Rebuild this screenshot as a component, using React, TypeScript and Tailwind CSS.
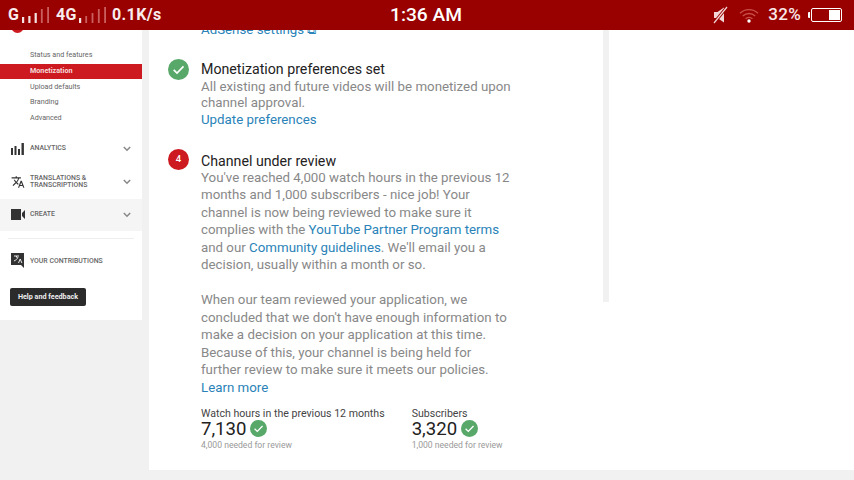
import React from "react";

const Check = ({ size }: { size: number }) => (
  <svg width={size} height={size} viewBox="0 0 24 24" className="shrink-0">
    <circle cx="12" cy="12" r="12" fill="#57a869" />
    <path d="M6.5 12.5l3.8 3.6 7.4-7.6" fill="none" stroke="#fff" strokeWidth="1.9" />
  </svg>
);

const Chevron = () => (
  <svg width="8" height="6" viewBox="0 0 8 6" className="shrink-0">
    <path d="M.8 1l3.2 3.2L7.2 1" fill="none" stroke="#888" strokeWidth="1.5" />
  </svg>
);

const Bars = ({ heights, lit, width }: { heights: number[]; lit: number; width: number }) => (
  <svg width={width} height="16" viewBox={`0 0 ${width} 16`} className="shrink-0">
    {heights.map((h, i) => (
      <rect
        key={i}
        x={i * 6.3 + 1}
        y={16 - h}
        width={i < lit ? 2.2 : 1.8}
        height={h}
        fill={i < lit ? "#f5e3e3" : "#c9605f"}
      />
    ))}
  </svg>
);

const Sub = ({ children, active }: { children: React.ReactNode; active?: boolean }) => (
  <div
    className={`flex h-[15.6px] items-center pl-[30px] text-[7.2px] ${
      active ? "bg-[#cc1a20] font-bold text-[#f7dcdc]" : "text-[#666]"
    }`}
  >
    {children}
  </div>
);

const Link = ({ children }: { children: React.ReactNode }) => (
  <span className="text-[#2a83b8]">{children}</span>
);

const Stat = ({ label, value, need }: { label: string; value: string; need: string }) => (
  <div className="flex flex-col">
    <div className="text-[10.6px] leading-[13px] text-[#444]">{label}</div>
    <div className="flex h-[20px] items-center gap-[4px] text-[18.6px] text-[#222]">
      {value}
      <span className="relative -top-[1px]">
        <Check size={17} />
      </span>
    </div>
    <div className="text-[8.6px] leading-[11px] text-[#999]">{need}</div>
  </div>
);

export default function App() {
  return (
    <div className="flex h-[480px] w-[854px] flex-col overflow-hidden bg-[#f1f1f1] font-['Roboto',sans-serif]">
      <header className="relative z-10 flex h-[30px] shrink-0 items-center bg-[#990000] pl-[8px] pr-[12px] text-white">
        <div className="flex w-[382px] items-center text-[16px] font-bold tracking-[0.4px] text-[#f8ecec]">
          <span className="w-[13px]">G</span>
          <Bars heights={[6, 7, 10, 14, 16]} lit={3} width={35} />
          <span className="w-[22px]">4G</span>
          <Bars heights={[5, 7, 10, 14, 16]} lit={1} width={34} />
          <span>0.1K/s</span>
        </div>
        <div className="text-[19.2px] font-medium">1:36 AM</div>
        <div className="ml-auto flex items-center">
          <svg width="15" height="18" viewBox="0 0 15 18" className="mr-[11px]">
            <path d="M1 6h3.500L11 1.500v15L4.500 12H1z" fill="#f2d6d6" />
            <path d="M1 17L14 1" stroke="#990000" strokeWidth="3" />
            <path d="M1 17L14 1" stroke="#f2d6d6" strokeWidth="1.2" />
          </svg>
          <svg width="20" height="15" viewBox="0 0 20 15" className="mr-[9px]">
            <path d="M1 5.200a13 13 0 0 1 18 0M3.800 8a9 9 0 0 1 12.400 0M6.600 10.800a5 5 0 0 1 6.800 0" fill="none" stroke="#c9504a" strokeWidth="1.4" />
            <circle cx="10" cy="13" r="1.700" fill="#fff" />
          </svg>
          <span className="mr-[7px] text-[17px] font-medium tracking-[0.3px] text-[#f8e8e8]">32%</span>
          <div className="flex items-center">
            <div className="h-[6px] w-[2px] rounded-l-[1px] bg-white" />
            <div className="ml-[1px] flex h-[14px] w-[31px] justify-end rounded-[2px] border border-white p-[1px]">
              <div className="w-[11px] bg-white" />
            </div>
          </div>
        </div>
      </header>

      <div className="flex min-h-0 flex-1 items-start gap-[7px]">
        <aside className="-mt-[12px] flex h-[302px] w-[142px] shrink-0 flex-col bg-white">
          <div className="flex h-[16px] items-center gap-[6px] pl-[11px] text-[7px] font-medium text-[#555]">
            <div className="h-[13px] w-[13px] rounded-full bg-[#cc1a20]" />
            <span>CHANNEL</span>
          </div>
          <div className="mt-[14px]">
            <Sub>Status and features</Sub>
            <Sub active>Monetization</Sub>
            <Sub>Upload defaults</Sub>
            <Sub>Branding</Sub>
            <Sub>Advanced</Sub>
          </div>
          <div className="mt-[6px] flex h-[32px] items-center pl-[11px] pr-[11px] pt-[2px] text-[6.9px] font-medium leading-[7.5px] text-[#666]">
            <svg width="13" height="12" viewBox="0 0 13 12" className="mr-[6px] shrink-0">
              <path d="M0 5h2v7H0zM3.500 3h2v9h-2zM7 6h2v6H7zM10.500 0h2.400v12h-2.400z" fill="#333" />
            </svg>
            <span className="flex-1">ANALYTICS</span>
            <Chevron />
          </div>
          <div className="flex h-[35px] items-center pl-[11px] pr-[11px] pt-[2px] text-[6.9px] font-medium leading-[7.3px] text-[#666]">
            <svg width="14" height="14" viewBox="0 0 24 24" className="mr-[5px] shrink-0">
              <path d="M12.900 15.100l-2.600-2.500a17.500 17.500 0 0 0 3.700-6.600H17V4h-7V2H8v2H1v2h11.200A15.700 15.700 0 0 1 9 11.400 15.600 15.600 0 0 1 6.700 8h-2c.7 1.600 1.700 3.200 3 4.600l-5.100 5L4 19l5-5 3.100 3.100zM18.500 10h-2L12 22h2l1.100-3h4.800l1.100 3h2zm-2.600 7l1.600-4.300 1.600 4.300z" fill="#333" />
            </svg>
            <span className="flex-1">
              TRANSLATIONS &amp;
              <br />
              TRANSCRIPTIONS
            </span>
            <Chevron />
          </div>
          <div className="flex h-[32px] items-center bg-[#f5f5f5] pl-[11px] pr-[11px] text-[6.9px] font-medium text-[#666]">
            <svg width="14" height="11" viewBox="0 0 14 11" className="mr-[5px] shrink-0">
              <path d="M0 0h10v11H0zM11 4l3-3v9l-3-3z" fill="#333" />
            </svg>
            <span className="mb-[1px] flex-1">CREATE</span>
            <Chevron />
          </div>
          <div className="mx-[8px] mt-[7px] h-px bg-[#eeeeee]" />
          <div className="mt-[12px] flex h-[18px] items-center pl-[11px] pt-[2px] text-[6.9px] font-medium text-[#666]">
            <svg width="14" height="15" viewBox="0 0 14 15" className="mr-[5px] shrink-0">
              <path d="M0 0h13v15l-3-3H0z" fill="#333" />
              <path d="M3 3h5M5.500 3v1.500M7 4c-.5 2-2 3-4 4" fill="none" stroke="#fff" strokeWidth=".9" />
              <path d="M7.500 10l1.700-4 1.700 4" fill="none" stroke="#fff" strokeWidth=".9" />
            </svg>
            <span>YOUR CONTRIBUTIONS</span>
          </div>
          <button className="ml-[10px] mt-[19px] flex h-[18px] w-[76px] items-center justify-center rounded-[2px] bg-[#2b2b2b] text-[7.2px] font-bold text-[#eee]">
            Help and feedback
          </button>
        </aside>

        <main className="flex h-[440px] min-w-0 flex-1 items-start overflow-hidden bg-white">
          <div className="h-full w-[454px] shrink-0 pl-[19px]">
            <div className="-mt-[9px] pl-[33px] text-[13.3px] leading-[17px] text-[#2a83b8]">AdSense settings ⧉</div>
            <section className="mt-[23px] flex">
              <div className="mt-[-2.5px] w-[33px] shrink-0">
                <Check size={21} />
              </div>
              <div className="w-[320px] text-[13.3px] leading-[16.5px] text-[#888]">
                <h2 className="text-[14.2px] font-normal leading-[17.5px] text-[#222]">Monetization preferences set</h2>
                <p>All existing and future videos will be monetized upon channel approval.</p>
                <Link>Update preferences</Link>
              </div>
            </section>
            <section className="mt-[25.5px] flex">
              <div className="-mt-[5px] w-[33px] shrink-0">
                <div className="flex h-[21px] w-[21px] items-center justify-center rounded-full bg-[#cc1a20] text-[9.500px] font-medium text-white">
                  4
                </div>
              </div>
              <div className="w-[312px] text-[13.3px] leading-[17.5px] text-[#888]">
                <h2 className="text-[14.2px] font-normal leading-[15px] text-[#222]">Channel under review</h2>
                <p>
                  You've reached 4,000 watch hours in the previous 12 months and 1,000 subscribers - nice job! Your
                  channel is now being reviewed to make sure it complies with the{" "}
                  <Link>YouTube Partner Program terms</Link> and our <Link>Community guidelines</Link>. We'll email you
                  a decision, usually within a month or so.
                </p>
                <p className="mt-[17.5px]">
                  When our team reviewed your application, we concluded that we don't have enough information to make a
                  decision on your application at this time. Because of this, your channel is being held for further
                  review to make sure it meets our policies.
                  <br />
                  <Link>Learn more</Link>
                </p>
              </div>
            </section>
            <div className="ml-[33px] mt-[10.5px] flex gap-[27px]">
              <Stat label="Watch hours in the previous 12 months" value="7,130" need="4,000 needed for review" />
              <Stat label="Subscribers" value="3,320" need="1,000 needed for review" />
            </div>
          </div>
          <div className="h-[272px] w-[6px] shrink-0 bg-[#f1f1f1]" />
        </main>
      </div>
    </div>
  );
}
